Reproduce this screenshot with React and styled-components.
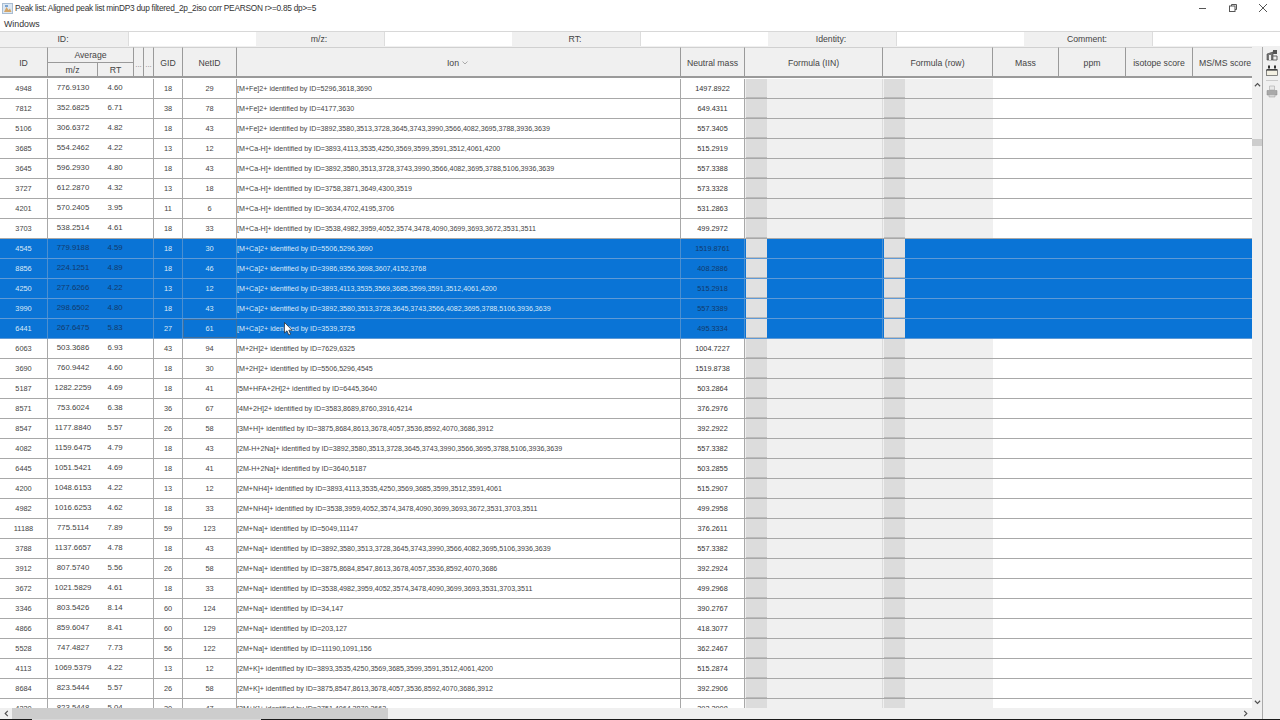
import React from "react";
import styled, { createGlobalStyle } from "styled-components";

const Global = createGlobalStyle`
  html, body { margin: 0; padding: 0; background: #f0f0f0; overflow: hidden; }
  body { font-family: "Liberation Sans", Arial, sans-serif; color: #222; }
`;

const COLS = "48px 50px 36px 10px 10px 29px 54px 444px 64px 138px 110px 66px 67px 67px 59px";
const BODY_COLS = "48px 106px 29px 54px 444px 64px 138px 110px 66px 67px 67px 59px";

const Win = styled.div`
  width: 1280px; height: 720px; display: flex; flex-direction: column;
  background: #f0f0f0; overflow: hidden; position: relative;
`;
const TitleBar = styled.div`
  height: 16px; background: #fff; display: flex; align-items: center; flex: none;
  font-size: 8.3px; letter-spacing: -0.24px; color: #333; padding-left: 2px; gap: 2px; position: relative;
`;
const WinBtns = styled.div`
  margin-left: auto; display: flex; align-items: center; height: 14px; padding-right: 2px;
`;
const WinBtn = styled.div`
  width: 30px; height: 14px; display: flex; align-items: center; justify-content: center;
`;
const MenuBar = styled.div`
  height: 15px; background: #fff; flex: none; font-size: 8.8px; color: #333;
  padding-left: 4px; display: flex; align-items: center;
`;
const FilterBar = styled.div`
  height: 16px; flex: none; display: grid; grid-template-columns: repeat(10, 128px);
  background: #f0f0f0; border-top: 1px solid #d8d8d8; box-sizing: border-box;
`;
const FilterLabel = styled.div`
  font-size: 8.7px; color: #444; display: flex; align-items: center; justify-content: center;
  padding: 0 2px 2px 0; background: #f0f0f0;
`;
const FilterInput = styled.div`
  background: #fff; border-left: 1px solid #ddd; margin-bottom: 1px;
`;
const Main = styled.div`
  flex: 1; min-height: 0; display: flex;
`;
const TableArea = styled.div`
  width: 1263px; flex: none; display: flex; flex-direction: column; min-height: 0;
  border-right: 1px solid #aaa; box-sizing: border-box;
`;
const HeaderRow = styled.div`
  height: 31px; flex: none; display: grid; grid-template-columns: ${COLS};
  grid-template-rows: 16px 15px; width: 1252px; overflow: hidden;
  border-bottom: 0; background: #f0f0f0;
`;
const Head = styled.div`
  grid-row: 1 / span 2; grid-column: ${p => p.$col || 1};
  display: flex; align-items: center; justify-content: center;
  font-size: 8.7px; color: #444; border-right: 1px solid #9a9a9a; border-bottom: 2px solid #9a9a9a;
  border-top: 1px solid #d0d0d0; box-sizing: border-box; white-space: nowrap; overflow: hidden; gap: 3px;
  padding-top: 1px;
`;
const IonHead = styled(Head)`
  padding-right: 2px;
`;
const ClippedHead = styled(Head)`
  justify-content: flex-start; padding-left: 6px; border-right: 0;
`;
const GroupHead = styled(Head)`
  grid-row: 1; grid-column: 2 / span 2; border-bottom: 1px solid #9a9a9a; padding-top: 0;
`;
const SubHead = styled(Head)`
  grid-row: 2; border-top: 0; padding-top: 0;
`;
const Dots = styled(Head)`
  color: #888; font-size: 8px; padding: 5px 0 0;
`;
const Body = styled.div`
  flex: 1; min-height: 0; display: flex; position: relative; overflow: hidden; background: #fff;
`;
const RowsClip = styled.div`
  width: 1252px; overflow: hidden; flex: none; padding-top: 1px; box-sizing: border-box;
`;
const Row = styled.div`
  height: 20px; box-sizing: border-box; display: grid; grid-template-columns: ${BODY_COLS};
  border-bottom: 1px solid ${p => (p.$sel ? "#5f9ad6" : "#a8a8a8")};
  background: ${p => (p.$sel ? "#0a74d6" : "#fff")};
`;
const Cell = styled.div`
  font-size: 7.4px; color: ${p => (p.$sel ? "#dbe9f7" : "#444")}; display: flex; align-items: center;
  justify-content: center; border-right: 1px solid ${p => (p.$sel ? "#4c8fd0" : "#a8a8a8")};
  box-sizing: border-box; white-space: nowrap; overflow: hidden;
  ${p => p.$focus && "outline: 1px solid #3d6f9f; outline-offset: -1px;"}
`;
const DarkCell = styled(Cell)`
  color: ${p => (p.$sel ? "#123a6b" : "#333")};
  font-size: 7.3px;
`;
const AvgCell = styled.div`
  display: grid; grid-template-columns: 50px 34px; font-size: 7.8px;
  border-right: 1px solid ${p => (p.$sel ? "#4c8fd0" : "#a8a8a8")};
  color: ${p => (p.$sel ? "#123a6b" : "#444")}; align-items: center; justify-items: center;
  padding-bottom: 3px; box-sizing: border-box;
`;
const IonCell = styled(Cell)`
  justify-content: flex-start; padding-left: 0; font-size: 7.12px;
`;
const FormulaCell = styled.div`
  display: flex; background: ${p => (p.$sel ? "#0a74d6" : "#f0f0f0")};
  border-right: ${p => (p.$right ? "0" : `1px solid ${p.$sel ? "#4c8fd0" : "#dcdcdc"}`)};
  box-sizing: border-box;
  padding-left: 1px;
`;
const FormulaBtn = styled.div`
  width: 21px; flex: none; background: ${p => (p.$sel ? "#e1e1e1" : "#dcdcdc")};
  border-bottom: 1px solid #bbb;
`;
const Empty = styled.div`background: transparent;`;
const VScroll = styled.div`
  width: 10px; flex: none; background: #f0f0f0; position: relative; display: flex;
  flex-direction: column; align-items: center; justify-content: space-between; padding: 3px 0 2px; box-sizing: border-box;
`;
const VThumb = styled.div`
  position: absolute; left: 0; top: 61px; width: 10px; height: 7px; background: #cdcdcd;
`;
const HScroll = styled.div`
  height: 11px; flex: none; background: #f0f0f0; position: relative; display: flex; align-items: center;
  justify-content: space-between; padding: 0 3px; box-sizing: border-box; width: 1252px;
`;
const HThumb = styled.div`
  position: absolute; left: 12px; top: 0; height: 11px; width: 376px; background: #cdcdcd;
`;
const TaskBar = styled.div`
  height: 1px; flex: none; background: #1a1a1a; position: relative;
`;
const TaskLight = styled.div`
  position: absolute; left: 32px; top: 0; width: 229px; height: 1px; background: #d8d8d8;
`;
const Tools = styled.div`
  width: 17px; flex: none; display: flex; flex-direction: column; align-items: center; padding-top: 2px; gap: 4px;
  background: #f0f0f0;
`;
const ToolSep = styled.div`width: 12px; height: 1px; background: #ccc;`;
const Cursor = styled.svg`
  position: absolute; left: 284px; top: 322px; width: 9px; height: 14px; z-index: 3;
`;
const SortMark = styled.svg`width: 6px; height: 4px;`;

const rows = [
  ["4948","776.9130","4.60","18","29","[M+Fe]2+ identified by ID=5296,3618,3690","1497.8922"],
  ["7812","352.6825","6.71","38","78","[M+Fe]2+ identified by ID=4177,3630","649.4311"],
  ["5106","306.6372","4.82","18","43","[M+Fe]2+ identified by ID=3892,3580,3513,3728,3645,3743,3990,3566,4082,3695,3788,3936,3639","557.3405"],
  ["3685","554.2462","4.22","13","12","[M+Ca-H]+ identified by ID=3893,4113,3535,4250,3569,3599,3591,3512,4061,4200","515.2919"],
  ["3645","596.2930","4.80","18","43","[M+Ca-H]+ identified by ID=3892,3580,3513,3728,3743,3990,3566,4082,3695,3788,5106,3936,3639","557.3388"],
  ["3727","612.2870","4.32","13","18","[M+Ca-H]+ identified by ID=3758,3871,3649,4300,3519","573.3328"],
  ["4201","570.2405","3.95","11","6","[M+Ca-H]+ identified by ID=3634,4702,4195,3706","531.2863"],
  ["3703","538.2514","4.61","18","33","[M+Ca-H]+ identified by ID=3538,4982,3959,4052,3574,3478,4090,3699,3693,3672,3531,3511","499.2972"],
  ["4545","779.9188","4.59","18","30","[M+Ca]2+ identified by ID=5506,5296,3690","1519.8761",1],
  ["8856","224.1251","4.89","18","46","[M+Ca]2+ identified by ID=3986,9356,3698,3607,4152,3768","408.2886",1],
  ["4250","277.6266","4.22","13","12","[M+Ca]2+ identified by ID=3893,4113,3535,3569,3685,3599,3591,3512,4061,4200","515.2918",1],
  ["3990","298.6502","4.80","18","43","[M+Ca]2+ identified by ID=3892,3580,3513,3728,3645,3743,3566,4082,3695,3788,5106,3936,3639","557.3389",1],
  ["6441","267.6475","5.83","27","61","[M+Ca]2+ identified by ID=3539,3735","495.3334",2],
  ["6063","503.3686","6.93","43","94","[M+2H]2+ identified by ID=7629,6325","1004.7227"],
  ["3690","760.9442","4.60","18","30","[M+2H]2+ identified by ID=5506,5296,4545","1519.8738"],
  ["5187","1282.2259","4.69","18","41","[5M+HFA+2H]2+ identified by ID=6445,3640","503.2864"],
  ["8571","753.6024","6.38","36","67","[4M+2H]2+ identified by ID=3583,8689,8760,3916,4214","376.2976"],
  ["8547","1177.8840","5.57","26","58","[3M+H]+ identified by ID=3875,8684,8613,3678,4057,3536,8592,4070,3686,3912","392.2922"],
  ["4082","1159.6475","4.79","18","43","[2M-H+2Na]+ identified by ID=3892,3580,3513,3728,3645,3743,3990,3566,3695,3788,5106,3936,3639","557.3382"],
  ["6445","1051.5421","4.69","18","41","[2M-H+2Na]+ identified by ID=3640,5187","503.2855"],
  ["4200","1048.6153","4.22","13","12","[2M+NH4]+ identified by ID=3893,4113,3535,4250,3569,3685,3599,3512,3591,4061","515.2907"],
  ["4982","1016.6253","4.62","18","33","[2M+NH4]+ identified by ID=3538,3959,4052,3574,3478,4090,3699,3693,3672,3531,3703,3511","499.2958"],
  ["11188","775.5114","7.89","59","123","[2M+Na]+ identified by ID=5049,11147","376.2611"],
  ["3788","1137.6657","4.78","18","43","[2M+Na]+ identified by ID=3892,3580,3513,3728,3645,3743,3990,3566,4082,3695,5106,3936,3639","557.3382"],
  ["3912","807.5740","5.56","26","58","[2M+Na]+ identified by ID=3875,8684,8547,8613,3678,4057,3536,8592,4070,3686","392.2924"],
  ["3672","1021.5829","4.61","18","33","[2M+Na]+ identified by ID=3538,4982,3959,4052,3574,3478,4090,3699,3693,3531,3703,3511","499.2968"],
  ["3346","803.5426","8.14","60","124","[2M+Na]+ identified by ID=34,147","390.2767"],
  ["4866","859.6047","8.41","60","129","[2M+Na]+ identified by ID=203,127","418.3077"],
  ["5528","747.4827","7.73","56","122","[2M+Na]+ identified by ID=11190,1091,156","362.2467"],
  ["4113","1069.5379","4.22","13","12","[2M+K]+ identified by ID=3893,3535,4250,3569,3685,3599,3591,3512,4061,4200","515.2874"],
  ["8684","823.5444","5.57","26","58","[2M+K]+ identified by ID=3875,8547,8613,3678,4057,3536,8592,4070,3686,3912","392.2906"],
  ["4220","823.5448","5.04","30","47","[2M+K]+ identified by ID=3751,4064,3870,3662","392.2908"],
];

const filters = ["ID:", "m/z:", "RT:", "Identity:", "Comment:"];

const AppIcon = () => (
  <svg width="11" height="11" viewBox="0 0 11 11">
    <rect x="0.5" y="0.5" width="10" height="10" fill="#dbe7f3" stroke="#a9bdd2" />
    <path d="M2 9 L4.5 4 L6.5 7 L8 5.5 L9.5 9 Z" fill="#d3a568" />
    <rect x="3" y="2" width="3" height="2" fill="#7aa3d0" />
  </svg>
);

const ToolA = () => (
  <svg width="12" height="12" viewBox="0 0 12 12">
    <path d="M1 5 L7 3 V11 H1 Z" fill="#777" stroke="#444" strokeWidth="0.6" />
    <rect x="3" y="6" width="2" height="5" fill="#eee" />
    <rect x="7" y="1" width="4" height="4" fill="#555" />
    <path d="M7 7 H11 V11 H7" fill="none" stroke="#666" />
  </svg>
);
const ToolB = () => (
  <svg width="12" height="11" viewBox="0 0 12 11">
    <rect x="2" y="0.5" width="2" height="3" fill="#333" />
    <rect x="8" y="0.5" width="2" height="3" fill="#333" />
    <rect x="0.5" y="4" width="11" height="1.4" fill="#444" />
    <rect x="0.5" y="5.4" width="11" height="5" fill="#f3f0e2" stroke="#555" strokeWidth="0.7" />
  </svg>
);
const ToolC = () => (
  <svg width="12" height="13" viewBox="0 0 12 13">
    <path d="M3.5 1 H8.5 V5 H3.5 Z" fill="#e8e8e8" stroke="#aaa" strokeWidth="0.6" />
    <path d="M1 5.5 H11 V10 H1 Z" fill="#a9a9a9" stroke="#888" strokeWidth="0.5" />
    <path d="M3 9.5 H9 V12 H3 Z" fill="#d5d5d5" stroke="#999" strokeWidth="0.5" />
  </svg>
);

const Chev = ({ d, size = 7 }) => (
  <svg width={size} height={size} viewBox="0 0 8 8">
    <path d={d} fill="none" stroke="#505050" strokeWidth="1.3" />
  </svg>
);

export default function App() {
  return (
    <Win>
      <Global />
      <TitleBar>
        <AppIcon />
        <span>Peak list: Aligned peak list minDP3 dup filtered_2p_2iso corr PEARSON r&gt;=0.85 dp&gt;=5</span>
        <WinBtns>
          <WinBtn>
            <svg width="10" height="10" viewBox="0 0 10 10"><path d="M1 5.5H8" stroke="#555" /></svg>
          </WinBtn>
          <WinBtn>
            <svg width="10" height="10" viewBox="0 0 10 10" fill="none" stroke="#555">
              <rect x="1.5" y="3" width="5.5" height="5.5" /><path d="M3.5 3V1.5H8.5V6.5H7" />
            </svg>
          </WinBtn>
          <WinBtn>
            <svg width="10" height="10" viewBox="0 0 10 10"><path d="M1 1L9 9M9 1L1 9" stroke="#555" /></svg>
          </WinBtn>
        </WinBtns>
      </TitleBar>
      <MenuBar>Windows</MenuBar>
      <FilterBar>
        {filters.map(f => (
          <React.Fragment key={f}>
            <FilterLabel>{f}</FilterLabel>
            <FilterInput />
          </React.Fragment>
        ))}
      </FilterBar>
      <Main>
        <TableArea>
          <HeaderRow>
            <Head $col={1}>ID</Head>
            <GroupHead>Average</GroupHead>
            <Dots $col={4}>...</Dots>
            <Dots $col={5}>...</Dots>
            <Head $col={6}>GID</Head>
            <Head $col={7}>NetID</Head>
            <IonHead $col={8}>
              Ion
              <SortMark viewBox="0 0 6 4"><path d="M0.5 0.5L3 3L5.5 0.5" fill="none" stroke="#aaa" /></SortMark>
            </IonHead>
            <Head $col={9}>Neutral mass</Head>
            <Head $col={10}>Formula (IIN)</Head>
            <Head $col={11}>Formula (row)</Head>
            <Head $col={12}>Mass</Head>
            <Head $col={13}>ppm</Head>
            <Head $col={14}>isotope score</Head>
            <ClippedHead $col={15}>MS/MS score</ClippedHead>
            <SubHead $col={2}>m/z</SubHead>
            <SubHead $col={3}>RT</SubHead>
          </HeaderRow>
          <Body>
            <RowsClip>
              {rows.map(r => {
                const sel = !!r[7];
                return (
                  <Row key={r[0]} $sel={sel}>
                    <Cell $sel={sel}>{r[0]}</Cell>
                    <AvgCell $sel={sel}><span>{r[1]}</span><span>{r[2]}</span></AvgCell>
                    <Cell $sel={sel}>{r[3]}</Cell>
                    <Cell $sel={sel} $focus={r[7] === 2}>{r[4]}</Cell>
                    <IonCell $sel={sel}>{r[5]}</IonCell>
                    <DarkCell $sel={sel}>{r[6]}</DarkCell>
                    <FormulaCell $sel={sel}><FormulaBtn $sel={sel} /></FormulaCell>
                    <FormulaCell $sel={sel} $right><FormulaBtn $sel={sel} /></FormulaCell>
                    <Empty /><Empty /><Empty /><Empty />
                  </Row>
                );
              })}
            </RowsClip>
            <VScroll>
              <Chev d="M1 6L4 3L7 6" />
              <VThumb />
              <Chev d="M1 2L4 5L7 2" />
            </VScroll>
          </Body>
          <HScroll>
            <Chev d="M5.5 1L2.5 4L5.5 7" />
            <HThumb />
            <Chev d="M2.5 1L5.5 4L2.5 7" />
          </HScroll>
        </TableArea>
        <Tools>
          <ToolA />
          <ToolB />
          <ToolSep />
          <ToolC />
        </Tools>
      </Main>
      <TaskBar><TaskLight /></TaskBar>
      <Cursor viewBox="0 0 9 14">
        <path d="M0.5 0.5V11L3 8.8L4.8 13L6.6 12.2L4.8 8.2H8Z" fill="#fff" stroke="#222" strokeWidth="0.7" />
      </Cursor>
    </Win>
  );
}
